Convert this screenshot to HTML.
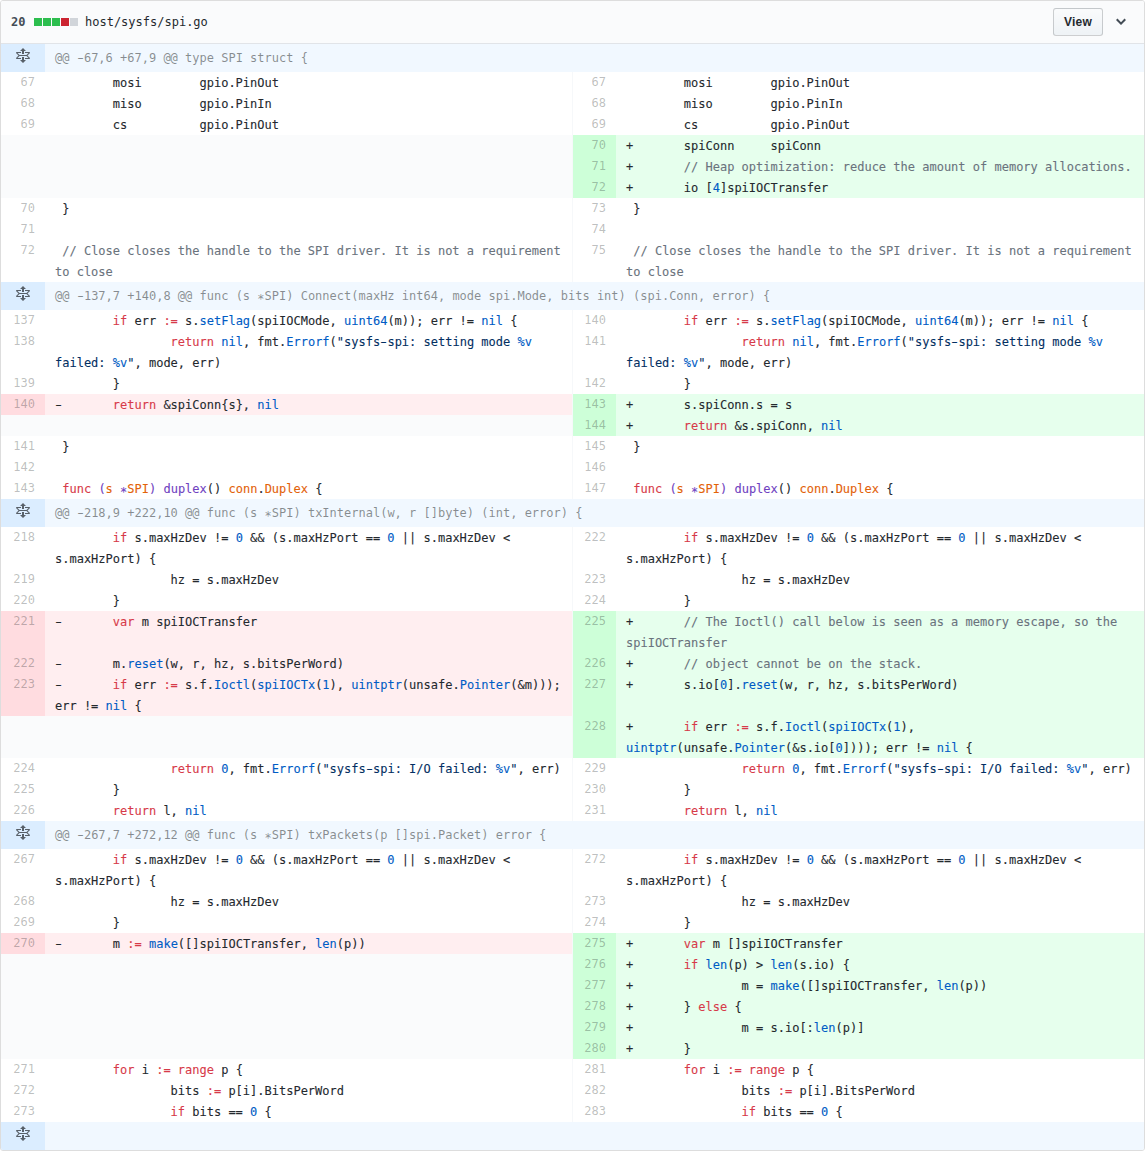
<!DOCTYPE html>
<html lang="en"><head><meta charset="utf-8"><title>host/sysfs/spi.go</title>
<style>
html,body{margin:0;padding:0;background:#fff}
body{width:1145px;height:1151px;overflow:hidden;font-family:"Liberation Sans",Helvetica,Arial,sans-serif;color:#24292e}
.file{position:absolute;left:0;top:0;width:1143px;height:1149px;border:1px solid #ddd;border-radius:3px;overflow:hidden;background:#fff}
.hdr{position:relative;height:42px;background:#fafbfc;border-bottom:1px solid #e1e4e8;font:12px/20px "DejaVu Sans Mono","Liberation Mono",monospace}
.hdr .cnt{position:absolute;left:10px;top:11px;font-weight:bold;color:#444d56}
.hdr .stat{position:absolute;left:33px;top:17px;height:8px;font-size:0;line-height:0}
.hdr .stat i{display:inline-block;width:8px;height:8px;margin-right:1px;background:#2cbe4e}
.hdr .stat i.r{background:#cb2431}
.hdr .stat i.n{background:#d1d5da}
.hdr .name{position:absolute;left:84px;top:11px;color:#24292e}
.btn{position:absolute;left:1052px;top:7px;width:48px;height:26px;border:1px solid rgba(27,31,35,.2);border-radius:3px;background:linear-gradient(-180deg,#fafbfc 0%,#eff3f6 90%);font:bold 12px/26px "Liberation Sans",Helvetica,Arial,sans-serif;text-align:center;color:#24292e;letter-spacing:.2px}
.chev{position:absolute;left:1115.3px;top:13.1px}
table{border-collapse:collapse;border-spacing:0;table-layout:fixed;width:1143px}
td{padding:0;vertical-align:top;font:12px/21px "DejaVu Sans Mono","Liberation Mono",monospace;height:21px;overflow:hidden}
td.num{width:44px;box-sizing:border-box;padding-right:10px;text-align:right;color:rgba(27,31,35,.3);white-space:nowrap}
td.code{padding:0 10px;white-space:pre;color:#24292e}
td.rn{border-left:1px solid #f6f8fa}
.n-add{background:#cdffd8}.c-add{background:#e6ffed}
.n-del{background:#ffdce0}.c-del{background:#ffeef0}
.empty{background:#fafbfc}
tr.hunk td{height:28px;line-height:28px}
td.hnum{background:#dbedff;padding:0;text-align:center}
td.hcode{background:#f1f8ff;color:rgba(27,31,35,.5)}
.ci{position:relative;top:1px;-webkit-text-stroke:.1px}
.a{position:relative;top:3px}
.h{display:inline-block;transform:scaleX(1.6)}
svg.unfold{display:block;margin:4px 0 0 15px;fill:#586069}
.k{color:#d73a49}.c{color:#005cc5}.s{color:#032f62}.m{color:#6a737d}.e{color:#6f42c1}.v{color:#e36209}
</style></head>
<body>
<div class="file">
<div class="hdr"><span class="cnt">20</span><span class="stat"><i></i><i></i><i></i><i class="r"></i><i class="n"></i></span><span class="name">host/sysfs/spi.go</span><span class="btn">View</span><svg class="chev" width="10" height="16" viewBox="0 0 10 16"><path fill="#444d56" fill-rule="evenodd" d="M5 11L0 6l1.500-1.500L5 8.250 8.500 4.500 10 6z"/></svg></div>
<table>
<colgroup><col style="width:44px"><col style="width:527px"><col style="width:44px"><col style="width:528px"></colgroup>
<tr class="hunk"><td class="num hnum"><svg class="unfold" width="14" height="16" viewBox="0 0 14 16"><path fill-rule="evenodd" d="M11.5 7.5L14 10c0 .55-.45 1-1 1H9v-1h3.5l-2-2h-7l-2 2H5v1H1c-.55 0-1-.45-1-1l2.5-2.5L0 5c0-.55.45-1 1-1h4v1H1.5l2 2h7l2-2H9V4h4c.55 0 1 .45 1 1l-2.5 2.5zM6 6h2V3h2L7 0 4 3h2v3zm2 3H6v3H4l3 3 3-3H8V9z"/></svg></td><td class="code hcode" colspan="3">@@ <span class="h">-</span>67,6 +67,9 @@ type SPI struct {</td></tr>
<tr><td class="num n-ctx">67</td><td class="code c-ctx"><span class="ci">        mosi        gpio.PinOut</span></td><td class="num rn n-ctx">67</td><td class="code c-ctx"><span class="ci">        mosi        gpio.PinOut</span></td></tr>
<tr><td class="num n-ctx">68</td><td class="code c-ctx"><span class="ci">        miso        gpio.PinIn</span></td><td class="num rn n-ctx">68</td><td class="code c-ctx"><span class="ci">        miso        gpio.PinIn</span></td></tr>
<tr><td class="num n-ctx">69</td><td class="code c-ctx"><span class="ci">        cs          gpio.PinOut</span></td><td class="num rn n-ctx">69</td><td class="code c-ctx"><span class="ci">        cs          gpio.PinOut</span></td></tr>
<tr><td class="num empty"></td><td class="code empty"></td><td class="num rn n-add">70</td><td class="code c-add"><span class="ci">+       spiConn     spiConn</span></td></tr>
<tr><td class="num empty"></td><td class="code empty"></td><td class="num rn n-add">71</td><td class="code c-add"><span class="ci">+       <span class="m">// Heap optimization: reduce the amount of memory allocations.</span></span></td></tr>
<tr><td class="num empty"></td><td class="code empty"></td><td class="num rn n-add">72</td><td class="code c-add"><span class="ci">+       io [<span class="c">4</span>]spiIOCTransfer</span></td></tr>
<tr><td class="num n-ctx">70</td><td class="code c-ctx"><span class="ci"> }</span></td><td class="num rn n-ctx">73</td><td class="code c-ctx"><span class="ci"> }</span></td></tr>
<tr><td class="num n-ctx">71</td><td class="code c-ctx"><span class="ci"> </span></td><td class="num rn n-ctx">74</td><td class="code c-ctx"><span class="ci"> </span></td></tr>
<tr><td class="num n-ctx" style="height:42px">72</td><td class="code c-ctx" style="height:42px"><span class="ci"> <span class="m">// Close closes the handle to the SPI driver. It is not a requirement
to close</span></span></td><td class="num rn n-ctx" style="height:42px">75</td><td class="code c-ctx" style="height:42px"><span class="ci"> <span class="m">// Close closes the handle to the SPI driver. It is not a requirement
to close</span></span></td></tr>
<tr class="hunk"><td class="num hnum"><svg class="unfold" width="14" height="16" viewBox="0 0 14 16"><path fill-rule="evenodd" d="M11.5 7.5L14 10c0 .55-.45 1-1 1H9v-1h3.5l-2-2h-7l-2 2H5v1H1c-.55 0-1-.45-1-1l2.5-2.5L0 5c0-.55.45-1 1-1h4v1H1.5l2 2h7l2-2H9V4h4c.55 0 1 .45 1 1l-2.5 2.5zM6 6h2V3h2L7 0 4 3h2v3zm2 3H6v3H4l3 3 3-3H8V9z"/></svg></td><td class="code hcode" colspan="3">@@ <span class="h">-</span>137,7 +140,8 @@ func (s <span class="a">*</span>SPI) Connect(maxHz int64, mode spi.Mode, bits int) (spi.Conn, error) {</td></tr>
<tr><td class="num n-ctx">137</td><td class="code c-ctx"><span class="ci">        <span class="k">if</span> err <span class="k">:=</span> s.<span class="c">setFlag</span>(spiIOCMode, <span class="c">uint64</span>(m)); err != <span class="c">nil</span> {</span></td><td class="num rn n-ctx">140</td><td class="code c-ctx"><span class="ci">        <span class="k">if</span> err <span class="k">:=</span> s.<span class="c">setFlag</span>(spiIOCMode, <span class="c">uint64</span>(m)); err != <span class="c">nil</span> {</span></td></tr>
<tr><td class="num n-ctx" style="height:42px">138</td><td class="code c-ctx" style="height:42px"><span class="ci">                <span class="k">return</span> <span class="c">nil</span>, fmt.<span class="c">Errorf</span>(<span class="s">"sysfs<span class="h">-</span>spi: setting mode </span><span class="c">%v</span><span class="s">
failed: </span><span class="c">%v</span><span class="s">"</span>, mode, err)</span></td><td class="num rn n-ctx" style="height:42px">141</td><td class="code c-ctx" style="height:42px"><span class="ci">                <span class="k">return</span> <span class="c">nil</span>, fmt.<span class="c">Errorf</span>(<span class="s">"sysfs<span class="h">-</span>spi: setting mode </span><span class="c">%v</span><span class="s">
failed: </span><span class="c">%v</span><span class="s">"</span>, mode, err)</span></td></tr>
<tr><td class="num n-ctx">139</td><td class="code c-ctx"><span class="ci">        }</span></td><td class="num rn n-ctx">142</td><td class="code c-ctx"><span class="ci">        }</span></td></tr>
<tr><td class="num n-del">140</td><td class="code c-del"><span class="ci"><span class="h">-</span>       <span class="k">return</span> &amp;spiConn{s}, <span class="c">nil</span></span></td><td class="num rn n-add">143</td><td class="code c-add"><span class="ci">+       s.spiConn.s = s</span></td></tr>
<tr><td class="num empty"></td><td class="code empty"></td><td class="num rn n-add">144</td><td class="code c-add"><span class="ci">+       <span class="k">return</span> &amp;s.spiConn, <span class="c">nil</span></span></td></tr>
<tr><td class="num n-ctx">141</td><td class="code c-ctx"><span class="ci"> }</span></td><td class="num rn n-ctx">145</td><td class="code c-ctx"><span class="ci"> }</span></td></tr>
<tr><td class="num n-ctx">142</td><td class="code c-ctx"><span class="ci"> </span></td><td class="num rn n-ctx">146</td><td class="code c-ctx"><span class="ci"> </span></td></tr>
<tr><td class="num n-ctx">143</td><td class="code c-ctx"><span class="ci"> <span class="k">func</span> <span class="e">(</span><span class="v">s</span><span class="e"> <span class="a">*</span></span><span class="v">SPI</span><span class="e">) duplex</span>() <span class="v">conn</span>.<span class="v">Duplex</span> {</span></td><td class="num rn n-ctx">147</td><td class="code c-ctx"><span class="ci"> <span class="k">func</span> <span class="e">(</span><span class="v">s</span><span class="e"> <span class="a">*</span></span><span class="v">SPI</span><span class="e">) duplex</span>() <span class="v">conn</span>.<span class="v">Duplex</span> {</span></td></tr>
<tr class="hunk"><td class="num hnum"><svg class="unfold" width="14" height="16" viewBox="0 0 14 16"><path fill-rule="evenodd" d="M11.5 7.5L14 10c0 .55-.45 1-1 1H9v-1h3.5l-2-2h-7l-2 2H5v1H1c-.55 0-1-.45-1-1l2.5-2.5L0 5c0-.55.45-1 1-1h4v1H1.5l2 2h7l2-2H9V4h4c.55 0 1 .45 1 1l-2.5 2.5zM6 6h2V3h2L7 0 4 3h2v3zm2 3H6v3H4l3 3 3-3H8V9z"/></svg></td><td class="code hcode" colspan="3">@@ <span class="h">-</span>218,9 +222,10 @@ func (s <span class="a">*</span>SPI) txInternal(w, r []byte) (int, error) {</td></tr>
<tr><td class="num n-ctx" style="height:42px">218</td><td class="code c-ctx" style="height:42px"><span class="ci">        <span class="k">if</span> s.maxHzDev != <span class="c">0</span> &amp;&amp; (s.maxHzPort == <span class="c">0</span> || s.maxHzDev &lt;
s.maxHzPort) {</span></td><td class="num rn n-ctx" style="height:42px">222</td><td class="code c-ctx" style="height:42px"><span class="ci">        <span class="k">if</span> s.maxHzDev != <span class="c">0</span> &amp;&amp; (s.maxHzPort == <span class="c">0</span> || s.maxHzDev &lt;
s.maxHzPort) {</span></td></tr>
<tr><td class="num n-ctx">219</td><td class="code c-ctx"><span class="ci">                hz = s.maxHzDev</span></td><td class="num rn n-ctx">223</td><td class="code c-ctx"><span class="ci">                hz = s.maxHzDev</span></td></tr>
<tr><td class="num n-ctx">220</td><td class="code c-ctx"><span class="ci">        }</span></td><td class="num rn n-ctx">224</td><td class="code c-ctx"><span class="ci">        }</span></td></tr>
<tr><td class="num n-del" style="height:42px">221</td><td class="code c-del" style="height:42px"><span class="ci"><span class="h">-</span>       <span class="k">var</span> m spiIOCTransfer</span></td><td class="num rn n-add" style="height:42px">225</td><td class="code c-add" style="height:42px"><span class="ci">+       <span class="m">// The Ioctl() call below is seen as a memory escape, so the
spiIOCTransfer</span></span></td></tr>
<tr><td class="num n-del">222</td><td class="code c-del"><span class="ci"><span class="h">-</span>       m.<span class="c">reset</span>(w, r, hz, s.bitsPerWord)</span></td><td class="num rn n-add">226</td><td class="code c-add"><span class="ci">+       <span class="m">// object cannot be on the stack.</span></span></td></tr>
<tr><td class="num n-del" style="height:42px">223</td><td class="code c-del" style="height:42px"><span class="ci"><span class="h">-</span>       <span class="k">if</span> err <span class="k">:=</span> s.f.<span class="c">Ioctl</span>(<span class="c">spiIOCTx</span>(<span class="c">1</span>), <span class="c">uintptr</span>(unsafe.<span class="c">Pointer</span>(&amp;m)));
err != <span class="c">nil</span> {</span></td><td class="num rn n-add" style="height:42px">227</td><td class="code c-add" style="height:42px"><span class="ci">+       s.io[<span class="c">0</span>].<span class="c">reset</span>(w, r, hz, s.bitsPerWord)</span></td></tr>
<tr><td class="num empty" style="height:42px"></td><td class="code empty" style="height:42px"></td><td class="num rn n-add" style="height:42px">228</td><td class="code c-add" style="height:42px"><span class="ci">+       <span class="k">if</span> err <span class="k">:=</span> s.f.<span class="c">Ioctl</span>(<span class="c">spiIOCTx</span>(<span class="c">1</span>),
<span class="c">uintptr</span>(unsafe.<span class="c">Pointer</span>(&amp;s.io[<span class="c">0</span>]))); err != <span class="c">nil</span> {</span></td></tr>
<tr><td class="num n-ctx">224</td><td class="code c-ctx"><span class="ci">                <span class="k">return</span> <span class="c">0</span>, fmt.<span class="c">Errorf</span>(<span class="s">"sysfs<span class="h">-</span>spi: I/O failed: </span><span class="c">%v</span><span class="s">"</span>, err)</span></td><td class="num rn n-ctx">229</td><td class="code c-ctx"><span class="ci">                <span class="k">return</span> <span class="c">0</span>, fmt.<span class="c">Errorf</span>(<span class="s">"sysfs<span class="h">-</span>spi: I/O failed: </span><span class="c">%v</span><span class="s">"</span>, err)</span></td></tr>
<tr><td class="num n-ctx">225</td><td class="code c-ctx"><span class="ci">        }</span></td><td class="num rn n-ctx">230</td><td class="code c-ctx"><span class="ci">        }</span></td></tr>
<tr><td class="num n-ctx">226</td><td class="code c-ctx"><span class="ci">        <span class="k">return</span> l, <span class="c">nil</span></span></td><td class="num rn n-ctx">231</td><td class="code c-ctx"><span class="ci">        <span class="k">return</span> l, <span class="c">nil</span></span></td></tr>
<tr class="hunk"><td class="num hnum"><svg class="unfold" width="14" height="16" viewBox="0 0 14 16"><path fill-rule="evenodd" d="M11.5 7.5L14 10c0 .55-.45 1-1 1H9v-1h3.5l-2-2h-7l-2 2H5v1H1c-.55 0-1-.45-1-1l2.5-2.5L0 5c0-.55.45-1 1-1h4v1H1.5l2 2h7l2-2H9V4h4c.55 0 1 .45 1 1l-2.5 2.5zM6 6h2V3h2L7 0 4 3h2v3zm2 3H6v3H4l3 3 3-3H8V9z"/></svg></td><td class="code hcode" colspan="3">@@ <span class="h">-</span>267,7 +272,12 @@ func (s <span class="a">*</span>SPI) txPackets(p []spi.Packet) error {</td></tr>
<tr><td class="num n-ctx" style="height:42px">267</td><td class="code c-ctx" style="height:42px"><span class="ci">        <span class="k">if</span> s.maxHzDev != <span class="c">0</span> &amp;&amp; (s.maxHzPort == <span class="c">0</span> || s.maxHzDev &lt;
s.maxHzPort) {</span></td><td class="num rn n-ctx" style="height:42px">272</td><td class="code c-ctx" style="height:42px"><span class="ci">        <span class="k">if</span> s.maxHzDev != <span class="c">0</span> &amp;&amp; (s.maxHzPort == <span class="c">0</span> || s.maxHzDev &lt;
s.maxHzPort) {</span></td></tr>
<tr><td class="num n-ctx">268</td><td class="code c-ctx"><span class="ci">                hz = s.maxHzDev</span></td><td class="num rn n-ctx">273</td><td class="code c-ctx"><span class="ci">                hz = s.maxHzDev</span></td></tr>
<tr><td class="num n-ctx">269</td><td class="code c-ctx"><span class="ci">        }</span></td><td class="num rn n-ctx">274</td><td class="code c-ctx"><span class="ci">        }</span></td></tr>
<tr><td class="num n-del">270</td><td class="code c-del"><span class="ci"><span class="h">-</span>       m <span class="k">:=</span> <span class="c">make</span>([]spiIOCTransfer, <span class="c">len</span>(p))</span></td><td class="num rn n-add">275</td><td class="code c-add"><span class="ci">+       <span class="k">var</span> m []spiIOCTransfer</span></td></tr>
<tr><td class="num empty"></td><td class="code empty"></td><td class="num rn n-add">276</td><td class="code c-add"><span class="ci">+       <span class="k">if</span> <span class="c">len</span>(p) &gt; <span class="c">len</span>(s.io) {</span></td></tr>
<tr><td class="num empty"></td><td class="code empty"></td><td class="num rn n-add">277</td><td class="code c-add"><span class="ci">+               m = <span class="c">make</span>([]spiIOCTransfer, <span class="c">len</span>(p))</span></td></tr>
<tr><td class="num empty"></td><td class="code empty"></td><td class="num rn n-add">278</td><td class="code c-add"><span class="ci">+       } <span class="k">else</span> {</span></td></tr>
<tr><td class="num empty"></td><td class="code empty"></td><td class="num rn n-add">279</td><td class="code c-add"><span class="ci">+               m = s.io[:<span class="c">len</span>(p)]</span></td></tr>
<tr><td class="num empty"></td><td class="code empty"></td><td class="num rn n-add">280</td><td class="code c-add"><span class="ci">+       }</span></td></tr>
<tr><td class="num n-ctx">271</td><td class="code c-ctx"><span class="ci">        <span class="k">for</span> i <span class="k">:=</span> <span class="k">range</span> p {</span></td><td class="num rn n-ctx">281</td><td class="code c-ctx"><span class="ci">        <span class="k">for</span> i <span class="k">:=</span> <span class="k">range</span> p {</span></td></tr>
<tr><td class="num n-ctx">272</td><td class="code c-ctx"><span class="ci">                bits <span class="k">:=</span> p[i].BitsPerWord</span></td><td class="num rn n-ctx">282</td><td class="code c-ctx"><span class="ci">                bits <span class="k">:=</span> p[i].BitsPerWord</span></td></tr>
<tr><td class="num n-ctx">273</td><td class="code c-ctx"><span class="ci">                <span class="k">if</span> bits == <span class="c">0</span> {</span></td><td class="num rn n-ctx">283</td><td class="code c-ctx"><span class="ci">                <span class="k">if</span> bits == <span class="c">0</span> {</span></td></tr>
<tr class="hunk"><td class="num hnum"><svg class="unfold" width="14" height="16" viewBox="0 0 14 16"><path fill-rule="evenodd" d="M11.5 7.5L14 10c0 .55-.45 1-1 1H9v-1h3.5l-2-2h-7l-2 2H5v1H1c-.55 0-1-.45-1-1l2.5-2.5L0 5c0-.55.45-1 1-1h4v1H1.5l2 2h7l2-2H9V4h4c.55 0 1 .45 1 1l-2.5 2.5zM6 6h2V3h2L7 0 4 3h2v3zm2 3H6v3H4l3 3 3-3H8V9z"/></svg></td><td class="code hcode" colspan="3"></td></tr>
</table>
</div>
</body></html>
